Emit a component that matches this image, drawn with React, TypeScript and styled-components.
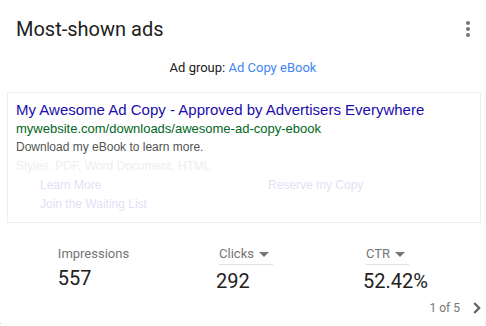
import styled, { createGlobalStyle } from "styled-components";

const GlobalStyle = createGlobalStyle`
  body {
    margin: 0;
    background: #fff;
    font-family: Roboto, "Liberation Sans", sans-serif;
  }
`;

const Card = styled.div`
  width: 486px;
  height: 324px;
  background: #fff;
  border-radius: 0 0 2px 2px;
  box-shadow: 0 1px 1px rgba(0, 0, 0, 0.28), 0 0 1px rgba(0, 0, 0, 0.12);
  display: flex;
  flex-direction: column;
  overflow: hidden;
`;

const Header = styled.header`
  display: flex;
  justify-content: space-between;
  align-items: center;
  padding: 15px 6px 0 16px;
  height: 28px;
`;

const Title = styled.h2`
  margin: 0;
  font-size: 20px;
  line-height: 28px;
  font-weight: 400;
  color: #212121;
`;

const IconButton = styled.button`
  border: 0;
  background: none;
  padding: 0;
  width: 24px;
  height: 24px;
  display: flex;
  align-items: center;
  justify-content: center;
  color: #757575;
`;

const AdGroupLine = styled.div`
  margin-top: 15px;
  text-align: center;
  font-size: 13px;
  line-height: 20px;
  color: #212121;
`;

const AdGroupLink = styled.a`
  color: #4285f4;
  text-decoration: none;
`;

const AdBox = styled.div`
  margin: 14px 5px 0 7px;
  border: 1px solid #eeeeee;
  padding: 7px 8px 8px;
  font-family: "Liberation Sans", Arial, sans-serif;
  line-height: 19px;
`;

const AdHeadline = styled.div`
  font-size: 15px;
  color: #1a0dab;
`;

const AdUrl = styled.div`
  font-size: 13px;
  color: #006621;
`;

const AdText = styled.div<{ $faded?: boolean }>`
  font-size: 12px;
  color: ${p => (p.$faded ? "#eeeeee" : "#545454")};
`;

const Sitelinks = styled.div`
  display: grid;
  grid-template-columns: 228px 1fr;
  padding-left: 24px;
  font-size: 12px;
  color: #e2dff6;
`;

const Stats = styled.div`
  margin-top: 21px;
  display: grid;
  grid-template-columns: repeat(3, 1fr);
  justify-items: center;
  padding: 0 15px 0 18px;
`;

const Stat = styled.div`
  display: flex;
  flex-direction: column;
  align-items: flex-start;
`;

const StatLabel = styled.div`
  font-size: 13px;
  line-height: 20px;
  color: #757575;
`;

const Dropdown = styled.div`
  display: flex;
  align-items: center;
  gap: 5px;
  margin-left: 3px;
  padding-right: 4px;
  border-bottom: 1px solid #e0e0e0;
  font-size: 13px;
  line-height: 20px;
  color: #757575;
`;

const StatValue = styled.div<{ $gap?: boolean }>`
  font-size: 20px;
  line-height: 28px;
  color: #212121;
  margin-top: ${p => (p.$gap ? "2px" : "0")};
`;

const Footer = styled.div`
  margin-top: 3px;
  display: flex;
  justify-content: flex-end;
  align-items: center;
  gap: 13px;
  padding-right: 5px;
  font-size: 12px;
  line-height: 20px;
  color: #757575;
`;

const MoreVert = () => (
  <svg width="24" height="24" viewBox="0 0 24 24" fill="currentColor">
    <circle cx="12" cy="6" r="2" />
    <circle cx="12" cy="12" r="2" />
    <circle cx="12" cy="18" r="2" />
  </svg>
);

const ArrowDown = () => (
  <svg width="10" height="5" viewBox="0 0 10 5" fill="currentColor">
    <path d="M0 0h10L5 5z" />
  </svg>
);

const Chevron = () => (
  <svg width="8" height="14" viewBox="0 0 8 14">
    <path d="M1.2 2l5 5-5 5" fill="none" stroke="#616161" strokeWidth="2.2" />
  </svg>
);

export default function App() {
  return (
    <>
      <GlobalStyle />
      <Card>
        <Header>
          <Title>Most-shown ads</Title>
          <IconButton aria-label="More options">
            <MoreVert />
          </IconButton>
        </Header>
        <AdGroupLine>
          Ad group: <AdGroupLink href="#">Ad Copy eBook</AdGroupLink>
        </AdGroupLine>
        <AdBox>
          <AdHeadline>My Awesome Ad Copy - Approved by Advertisers Everywhere</AdHeadline>
          <AdUrl>mywebsite.com/downloads/awesome-ad-copy-ebook</AdUrl>
          <AdText>Download my eBook to learn more.</AdText>
          <AdText $faded>Styles: PDF, Word Document, HTML</AdText>
          <Sitelinks>
            <span>Learn More</span>
            <span>Reserve my Copy</span>
            <span>Join the Waiting List</span>
          </Sitelinks>
        </AdBox>
        <Stats>
          <Stat>
            <StatLabel>Impressions</StatLabel>
            <StatValue>557</StatValue>
          </Stat>
          <Stat>
            <Dropdown>
              Clicks <ArrowDown />
            </Dropdown>
            <StatValue $gap>292</StatValue>
          </Stat>
          <Stat>
            <Dropdown>
              CTR <ArrowDown />
            </Dropdown>
            <StatValue $gap>52.42%</StatValue>
          </Stat>
        </Stats>
        <Footer>
          <span>1 of 5</span>
          <Chevron />
        </Footer>
      </Card>
    </>
  );
}
